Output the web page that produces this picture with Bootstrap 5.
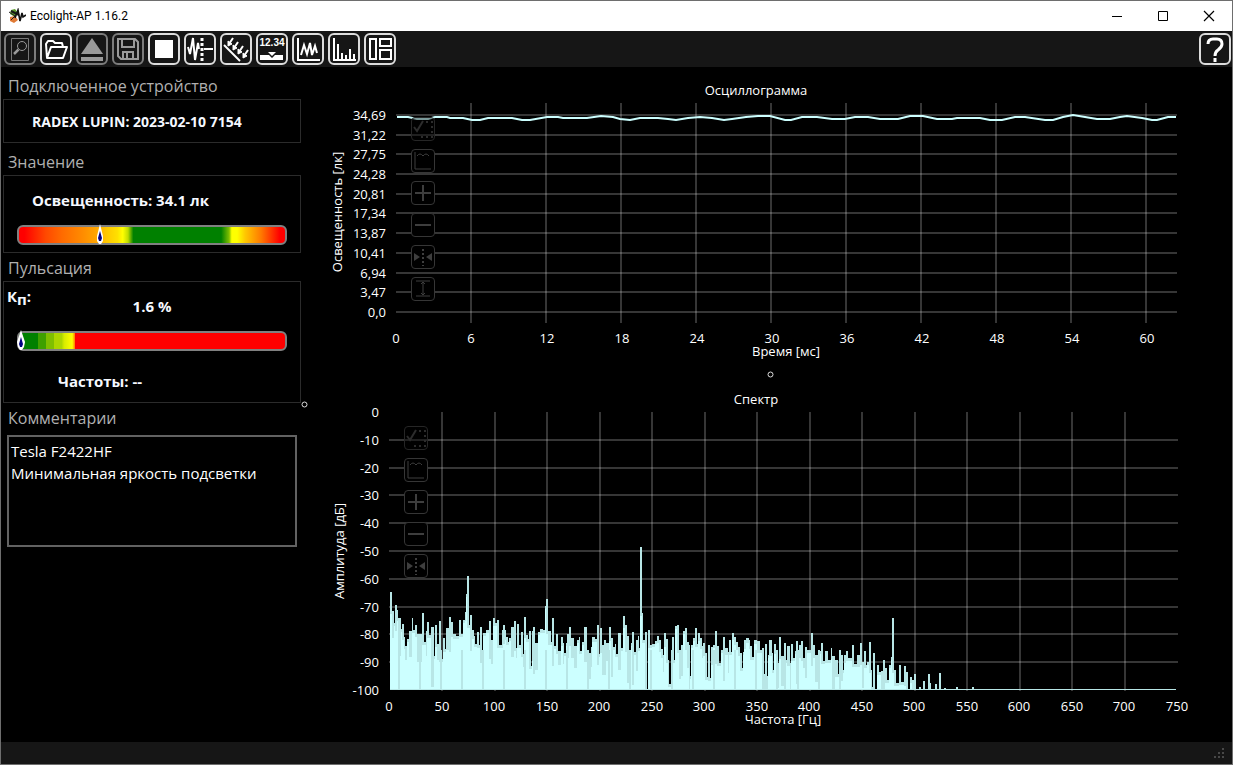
<!DOCTYPE html>
<html lang="ru">
<head>
<meta charset="utf-8">
<meta name="viewport" content="width=device-width, initial-scale=1">
<title>Ecolight-AP 1.16.2</title>
<link href="https://cdn.jsdelivr.net/npm/bootstrap@5.3.0/dist/css/bootstrap.min.css" rel="stylesheet">
<style>
  body { background: #000; color: #fff; font-family: "Open Sans", "Noto Sans", sans-serif; font-size: 15px; }
  .app-window { min-height: 100vh; border: 1px solid #6e6e6e; }
  .title-bar { height: 30px; background: #fff; color: #000; font-size: 12px; padding-left: 8px; }
  .title-text { font-family: Roboto, "Open Sans", sans-serif; }
  .win-btn { width: 46px; height: 28px; border: 0; padding: 0; background: none; color: #000; }
  .tool-bar { height: 36px; background: #161616; padding: 0 1px 0 3px; gap: 4px; }
  .tool-btn { width: 32px; height: 32px; padding: 0; border: 2px solid #dcdcdc; border-radius: 6px; background: #161616; color: #fff; }
  .tool-btn:disabled { border-color: #7c7c7c; color: #9a9a9a; opacity: 1; }
  .tool-btn svg, .chart-btn svg, .win-btn svg { display: block; margin: auto; }
  .side-panel { width: 300px; flex: none; padding-left: 2px; }
  .group-title { font-size: 16px; line-height: 26px; color: #b0b0b0; margin: 0; padding: 2px 0 0 5px; font-weight: 400; }
  .group-title.roomy { padding-top: 6px; }
  .group-box { border: 1px solid #2b2b2b; color: #f5f8ff; font-weight: 700; line-height: 22px; }
  .device-name { font-size: 14px; padding: 11px 0 9px 28px; }
  .light-box { padding-bottom: 7px; }
  .light-value { padding: 13px 0 14px 28px; }
  .kp { padding-left: 3px; line-height: 16px; height: 14px; padding-top: 6px; }
  .kp sub { font-size: 15px; bottom: -3px; }
  .pulse-value { line-height: 20px; padding-bottom: 15px; }
  .freq-value { padding: 19px 0 10px 54px; }
  .meter { height: 20px; margin: 0 13px; border: 2px solid #808080; border-radius: 6px; position: relative; }
  .meter-light { background: linear-gradient(90deg,#f00 2%,#ff4800 10%,#ff6a00 16%,#ff8c00 24%,#ffa500 29%,#ffc800 33%,#ffe000 37%,#ff0 39%,#c0dc00 41%,#008000 43%,#008000 76%,#7fbf00 79%,#ff0 80%,#ff0 82%,#ffc800 85%,#ff7a00 91%,#f00 98%); }
  .meter-pulse { background: linear-gradient(90deg,#008000 7%,#3fa000 7%,#3fa000 10%,#7fbf00 10%,#7fbf00 13%,#acd600 13%,#acd600 16%,#d8ec00 17%,#ff0 20%,#ff8000 21%,#f00 21%); }
  .meter-mark { position: absolute; top: -3px; margin-left: -6px; }
  .comment-box { width: 290px; height: 112px; margin: 4px 0 0 4px; padding: 3px 2px; border: 2px solid #626262; border-radius: 0; background: #000; color: #fff; font-size: 15px; line-height: 22px; resize: none; }
  .splitter-v { width: 7px; flex: none; }
  .splitter-h { height: 14px; }
  .chart-area svg.plot { display: block; width: 100%; height: auto; }
  .plot text { fill: #fff; font-size: 13px; }
  .chart-tools { position: absolute; gap: 8px; }
  .wave-tools { left: 103px; top: 50px; }
  .spec-tools { left: 96px; top: 45px; }
  .chart-btn { width: 24px; height: 24px; padding: 0; border: 1px solid #363636; border-radius: 4px; background: #000; color: #3e3e3e; }
  .chart-btn.faint { background: #0006; color: #2c2c2c; border-color: #262626; }
  .status-bar { height: 22px; background: #161616; padding: 0 7px 5px 0; }
</style>
</head>
<body>
<div class="app-window d-flex flex-column">
  <header class="title-bar d-flex align-items-center">
    <svg width="17" height="16" viewBox="0 0 17 16" class="me-1" aria-hidden="true">
      <path d="M2 2 6 1 9 5 6 9 1 6Z" fill="#5a9a2c"/><path d="M1 9 6 8 9 12 5 15 1 13Z" fill="#e07a35"/>
      <path d="M0 4 6 8 2 12" fill="none" stroke="#222"/>
      <path d="M2 3 10 7" stroke="#1a1a1a" stroke-width="2"/>
      <path d="M6 10 9 2 11 13 13 5 14 9 17 7" fill="none" stroke="#111" stroke-width="1.6"/>
    </svg>
    <span class="title-text">Ecolight-AP 1.16.2</span>
    <div class="d-flex ms-auto">
      <button class="win-btn" aria-label="Свернуть"><svg width="12" height="12"><path d="M1 6.5H11" stroke="#000"/></svg></button>
      <button class="win-btn" aria-label="Развернуть"><svg width="12" height="12"><path d="M1.500 1.500H10.500V10.500H1.500Z" fill="none" stroke="#000"/></svg></button>
      <button class="win-btn" aria-label="Закрыть"><svg width="12" height="12"><path d="M1 1 11 11M11 1 1 11" stroke="#000" stroke-width="1.200"/></svg></button>
    </div>
  </header>

  <nav class="tool-bar d-flex align-items-center" aria-label="Панель инструментов">
    <button class="tool-btn" disabled aria-label="Просмотр"><svg width="28" height="28" fill="none" stroke="currentColor"><path d="M5.500 3.500H22.500V25.500H5.500Z" stroke="#777"/><circle cx="16" cy="11" r="4.500"/><path d="M12.500 14.500 8 19" stroke-width="2.500"/></svg></button>
    <button class="tool-btn" aria-label="Открыть"><svg width="28" height="28" fill="none" stroke="currentColor" stroke-width="2" stroke-linejoin="round"><path d="M5 23 4 9 6 6H11L13 8H20L21 12M5 23 9 12H25L21 23Z"/></svg></button>
    <button class="tool-btn" disabled aria-label="Извлечь"><svg width="28" height="28" fill="currentColor"><path d="M14 3 25 19H3ZM3 22H25V26H3Z"/></svg></button>
    <button class="tool-btn" disabled aria-label="Сохранить"><svg width="28" height="28" fill="none" stroke="currentColor" stroke-width="2"><path d="M4 4H21L24 7V24H7L4 21Z"/><path d="M8 4V12H20V4M9 24V17H19V24M13 18V24"/></svg></button>
    <button class="tool-btn" aria-label="Стоп"><svg width="28" height="28"><path d="M5 5H23V23H5Z" fill="currentColor"/></svg></button>
    <button class="tool-btn" aria-label="Сигнал"><svg width="28" height="28" fill="none" stroke="currentColor" stroke-width="2"><path d="M2 12 4 19 7 3 9 25 12 8 13 14"/><path d="M16 3V26" stroke-width="3" stroke-dasharray="3 2"/><path d="M18 14H27"/></svg></button>
    <button class="tool-btn" aria-label="Освещённость"><svg width="28" height="28" stroke="currentColor" stroke-width="2"><path d="M2 10 18 26"/><path d="M11 3 7 9M16 7 12 13M21 11 17 17M26 15 22 21" fill="none"/><path d="M6 11V6L10 9ZM11 15V10L15 13ZM16 19V14L20 17ZM21 23V18L25 21Z" fill="currentColor" stroke-width="1"/></svg></button>
    <button class="tool-btn" aria-label="Показания"><svg width="28" height="28" fill="currentColor"><text x="14" y="11" text-anchor="middle" font-family="Liberation Sans, sans-serif" font-weight="700" font-size="10">12.34</text><path d="M2 20H11L14 23 17 20H25V25H2ZM10 17H18L14 21Z"/></svg></button>
    <button class="tool-btn" aria-label="Осциллограмма"><svg width="28" height="28" fill="none" stroke="currentColor" stroke-width="2"><path d="M4 3V25H26"/><path d="M7 20 10 10 13 19 16 8 18 20 21 11 23 18"/></svg></button>
    <button class="tool-btn" aria-label="Спектр"><svg width="28" height="28" fill="none" stroke="currentColor" stroke-width="2"><path d="M4 3V25H26M8 9V25M12 18V25M16 20V25M20 14V25M24 19V25"/></svg></button>
    <button class="tool-btn" aria-label="Расположение окон"><svg width="28" height="28" fill="none" stroke="currentColor" stroke-width="2"><path d="M4 4H10V24H4ZM14 4H25V11H14ZM14 15H25V24H14Z"/></svg></button>
    <button class="tool-btn ms-auto" aria-label="Справка"><svg width="28" height="28" fill="none" stroke="currentColor" stroke-width="3"><path d="M7 9Q7 4 12 4H16Q21 4 21 9Q21 12 17 15Q14 17 14 21M14 23V27"/></svg></button>
  </nav>

  <main class="d-flex flex-grow-1">
    <section class="side-panel">
      <h2 class="group-title roomy">Подключенное устройство</h2>
      <div class="group-box device-name">RADEX LUPIN: 2023-02-10 7154</div>

      <h2 class="group-title roomy">Значение</h2>
      <div class="group-box light-box">
        <div class="light-value">Освещенность: 34.1 лк</div>
        <div class="meter meter-light"><svg class="meter-mark" style="left:31%" width="10" height="20"><path d="M5 0 8 12 8 17 6 20H4L2 17V12Z" fill="#fff"/><path d="M5 7 7 14 6 17H4L3 14Z" fill="#000080"/></svg></div>
      </div>

      <h2 class="group-title">Пульсация</h2>
      <div class="group-box">
        <div class="kp">К<sub>п</sub>:</div>
        <div class="text-center pulse-value">1.6 %</div>
        <div class="meter meter-pulse"><svg class="meter-mark" style="left:1%" width="10" height="20"><path d="M5 0 9 12 8 17 6 20H4L2 17 1 12Z" fill="#fff"/><path d="M5 7 7 14 6 17H4L3 14Z" fill="#000080"/></svg></div>
        <div class="freq-value">Частоты: --</div>
      </div>

      <label class="group-title d-block" for="comments">Комментарии</label>
      <textarea id="comments" class="comment-box d-block" spellcheck="false">Tesla F2422HF
Минимальная яркость подсветки</textarea>
    </section>

    <div class="splitter-v d-flex align-items-center"><svg width="7" height="7"><circle cx="3.500" cy="3.500" r="2.500" fill="none" stroke="#ddd"/></svg></div>

    <section class="chart-area flex-grow-1">
      <div class="position-relative">
        <svg class="plot" id="wave" viewBox="308 67 924 300" role="img" aria-label="Осциллограмма"></svg>
        <div class="chart-tools wave-tools d-flex flex-column" data-tools="auto fit plus minus mirror span"></div>
      </div>
      <div class="splitter-h d-flex justify-content-center align-items-center"><svg width="7" height="7"><circle cx="3.500" cy="3.500" r="2.500" fill="none" stroke="#ddd"/></svg></div>
      <div class="position-relative">
        <svg class="plot" id="spectrum" viewBox="308 381 924 361" role="img" aria-label="Спектр"></svg>
        <div class="chart-tools spec-tools d-flex flex-column" data-tools="auto fit plus minus mirror"></div>
      </div>
    </section>
  </main>

  <footer class="status-bar d-flex justify-content-end align-items-end">
    <svg width="12" height="12" fill="#484848"><path d="M9 1h2v2H9zM5 5h2v2H5zM9 5h2v2H9zM1 9h2v2H1zM5 9h2v2H5zM9 9h2v2H9z"/></svg>
  </footer>
</div>

<script src="https://cdn.jsdelivr.net/npm/bootstrap@5.3.0/dist/js/bootstrap.bundle.min.js"></script>
<script>
  const label = (x, y, t, anchor = 'middle', extra = '') =>
    `<text x="${x}" y="${y}" text-anchor="${anchor}" ${extra}>${t}</text>`;
  const grid = (xs, ys, l, r, t, b) =>
    `<path fill="none" stroke="#fff" stroke-opacity=".21" stroke-width="2" d="${ys.map(y => `M${l} ${y}H${r}`).join('')}"/>` +
    `<path fill="none" stroke="#fff" stroke-opacity=".21" stroke-width="2" d="${xs.map(x => `M${x} ${t}V${b}`).join('')}"/>`;

  // Oscillogram
  const wy = [115, 135, 154, 174, 194, 213, 233, 253, 273, 292, 312];
  const wt = ['34,69', '31,22', '27,75', '24,28', '20,81', '17,34', '13,87', '10,41', '6,94', '3,47', '0,0'];
  const wx = Array.from({length: 10}, (_, i) => 471 + i * 75);
  const trace = '397,117 408,117 417,119 428,119 435,117 447,117 450,118 463,118 472,120 480,120 488,118 512,118 522,120 530,120 547,117 558,117 563,118 587,118 601,116 613,117 620,119 630,120 640,118 658,118 668,119 676,120 688,118 700,117 712,118 724,120 732,119 746,117 758,116 770,116 785,120 791,120 802,117 817,117 832,119 845,119 855,117 868,117 880,119 898,119 910,116 923,116 937,119 952,119 957,118 980,118 990,120 1002,120 1015,117 1025,117 1045,120 1053,120 1063,117 1073,115 1085,117 1097,119 1110,119 1120,117 1127,116 1142,118 1152,120 1157,120 1168,117 1176,117';
  document.getElementById('wave').innerHTML =
    grid(wx, wy, 396, 1177, 103, 323) +
    wt.map((t, i) => label(386, wy[i] + 5, t, 'end')).join('') +
    label(396, 343, '0') + wx.map((x, i) => label(x + (i ? 1 : 0), 343, (i + 1) * 6)).join('') +
    label(756, 95, 'Осциллограмма') + label(786, 356, 'Время [мс]') +
    label(0, 0, 'Освещенность [лк]', 'middle', 'transform="translate(342 212) rotate(-90)"') +
    `<polyline points="${trace}" fill="none" stroke="#ccffff" stroke-width="2"/>`;

  // Spectrum: each pair is a column position and the height its top reaches
  const tops = [390,592,392,611,394,623,395,605,397,610,398,618,401,629,402,624,404,637,405,646,407,639,409,631,412,618,413,630,415,625,417,634,422,613,424,642,426,631,427,622,429,635,431,627,434,656,435,625,437,644,439,621,441,659,443,638,445,649,446,628,449,617,451,622,453,634,456,636,459,620,461,634,463,620,465,612,466,594,467,576,469,625,470,615,472,630,474,636,475,644,477,632,479,645,480,627,482,660,483,633,486,630,489,621,491,640,493,618,495,623,497,620,499,645,502,630,503,625,505,630,506,637,508,642,509,638,511,627,514,621,516,648,517,624,519,645,521,632,523,654,524,617,526,635,528,639,529,631,531,666,532,631,533,627,535,643,538,632,540,629,543,630,545,606,546,599,548,631,551,642,552,618,554,646,556,634,558,651,561,637,563,643,564,653,566,643,567,634,569,627,571,638,574,646,577,640,579,637,580,651,582,642,584,627,587,659,589,653,591,647,592,637,595,639,597,625,599,654,600,628,602,645,604,640,606,643,609,627,611,638,613,647,615,644,616,654,618,633,621,648,623,616,625,625,627,636,629,665,631,643,632,632,634,652,636,640,638,636,639,648,640,547,642,613,643,640,645,632,647,690,648,630,650,645,652,644,655,641,657,636,659,640,661,649,663,655,664,633,666,639,668,660,669,684,671,668,672,637,674,660,675,626,677,625,679,650,681,645,683,631,685,628,687,642,689,645,690,676,691,645,693,638,695,628,697,644,698,633,700,638,702,646,703,643,705,653,707,677,708,645,710,678,711,647,713,645,715,631,717,646,719,663,721,650,723,637,725,648,728,652,729,640,731,652,732,633,734,637,736,642,738,647,740,653,742,668,743,652,744,640,746,638,749,640,750,646,752,657,754,640,757,641,760,650,762,648,764,674,765,644,767,676,768,655,769,640,772,653,773,670,774,644,776,651,778,663,779,637,781,656,784,643,786,660,787,646,790,663,791,644,793,658,795,651,796,641,798,658,799,645,801,641,803,658,805,647,807,650,811,633,813,645,815,655,818,660,819,651,821,643,823,661,825,651,828,660,831,648,832,656,835,660,838,674,840,655,843,670,844,655,846,651,848,658,852,645,854,664,857,655,860,643,862,662,864,651,866,665,867,662,869,642,871,670,872,687,873,653,875,690,877,665,879,672,881,671,883,660,885,668,887,680,889,665,891,657,892,618,894,670,896,683,899,665,901,682,904,666,906,672,908,690,910,677,912,680,914,674,916,690,919,687,921,690,923,681,925,690,928,674,930,683,931,690,935,684,937,690,939,673,941,690,944,688,946,690,954,689,956,687,958,690,972,687,974,690];
  const base = 690;
  let outline = `M390 ${base}`, inner = '', stripes = '', seed = 7;
  const rnd = () => (seed = (seed * 16807) % 2147483647) / 2147483647;
  for (let i = 0; i < tops.length; i += 2) {
    const x = tops[i], y = tops[i + 1], next = tops[i + 2] || 975;
    outline += `H${x}V${y}`;
    const near = Math.max(y, tops[i + 3] || base);
    const depth = rnd() < .7 ? near + 3 : near + 8 + Math.floor(rnd() * 26);
    if (depth < base) inner += `M${x} ${base}V${depth}H${next}V${base}z`;
  }
  for (let x = 399; x < 860; x += 21) stripes += `M${x} ${base}v-40`;
  document.getElementById('spectrum').innerHTML =
    grid(Array.from({length: 14}, (_, i) => Math.round(442 + i * 52.5)), [440, 468, 495, 523, 551, 579, 607, 634, 662], 389, 1178, 412, 691) +
    ['0', '-10', '-20', '-30', '-40', '-50', '-60', '-70', '-80', '-90', '-100'].map((t, i) => label(379, Math.round(417 + i * 27.8), t, 'end')).join('') +
    Array.from({length: 16}, (_, i) => label(Math.round(389 + i * 52.5), 711, i * 50)).join('') +
    label(756, 404, 'Спектр') + label(783, 724, 'Частота [Гц]') +
    label(0, 0, 'Амплитуда [дБ]', 'middle', 'transform="translate(344 551) rotate(-90)"') +
    `<g shape-rendering="crispEdges"><path d="${outline}V${base}Z" fill="#b8e6e6"/><path d="${inner}" fill="#ccffff"/>` +
    `<path d="${stripes}" stroke="#b8e6e6" stroke-width="2"/><path d="M390 689.500H1176" stroke="#b8e6e6"/></g>`;

  // Buttons over each plot
  const glyphs = {
    auto: ['Авто', '<path d="M2 9 5 13 11 3" stroke-width="2"/><path d="M14 4H20V19H8" stroke-width="2" stroke-dasharray="2 3"/>'],
    fit: ['Вписать', '<path d="M3 2V19H19M5 6Q8 2 11 6Q14 2 17 6"/>'],
    plus: ['Увеличить', '<path d="M3 11H19M11 3V19" stroke-width="2"/>'],
    minus: ['Уменьшить', '<path d="M3 11H19" stroke-width="2"/>'],
    mirror: ['Сжать', '<path d="M11 3V20" stroke-width="2" stroke-dasharray="2 2"/><path d="M2 7V15L8 11ZM20 7V15L14 11Z" fill="currentColor" stroke="none"/>'],
    span: ['По высоте', '<path d="M4 3H18M4 18H18M11 4V17M9 6 11 4 13 6M9 15 11 17 13 15"/>']
  };
  document.querySelectorAll('[data-tools]').forEach(box => {
    box.innerHTML = box.dataset.tools.split(' ').map(k =>
      `<button class="chart-btn${k === 'auto' ? ' faint' : ''}" aria-label="${glyphs[k][0]}"><svg width="22" height="22" fill="none" stroke="currentColor">${glyphs[k][1]}</svg></button>`).join('');
  });
</script>
</body>
</html>
